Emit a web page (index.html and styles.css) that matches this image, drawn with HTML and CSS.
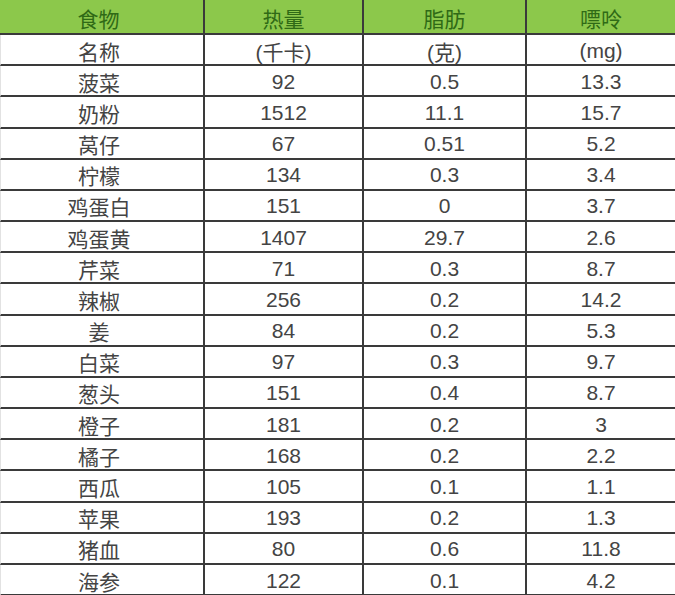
FILE: index.html
```html
<!DOCTYPE html>
<html lang="zh">
<head>
<meta charset="utf-8">
<link rel="stylesheet" href="styles.css">
</head>
<body>
<div class="table">
  <div class="cell head first">食物</div><div class="cell head">热量</div><div class="cell head">脂肪</div><div class="cell head">嘌呤</div>
  <div class="cell first">名称</div><div class="cell">(千卡)</div><div class="cell">(克)</div><div class="cell">(mg)</div>
  <div class="cell first">菠菜</div><div class="cell">92</div><div class="cell">0.5</div><div class="cell">13.3</div>
  <div class="cell first">奶粉</div><div class="cell">1512</div><div class="cell">11.1</div><div class="cell">15.7</div>
  <div class="cell first">莴仔</div><div class="cell">67</div><div class="cell">0.51</div><div class="cell">5.2</div>
  <div class="cell first">柠檬</div><div class="cell">134</div><div class="cell">0.3</div><div class="cell">3.4</div>
  <div class="cell first">鸡蛋白</div><div class="cell">151</div><div class="cell">0</div><div class="cell">3.7</div>
  <div class="cell first">鸡蛋黄</div><div class="cell">1407</div><div class="cell">29.7</div><div class="cell">2.6</div>
  <div class="cell first">芹菜</div><div class="cell">71</div><div class="cell">0.3</div><div class="cell">8.7</div>
  <div class="cell first">辣椒</div><div class="cell">256</div><div class="cell">0.2</div><div class="cell">14.2</div>
  <div class="cell first">姜</div><div class="cell">84</div><div class="cell">0.2</div><div class="cell">5.3</div>
  <div class="cell first">白菜</div><div class="cell">97</div><div class="cell">0.3</div><div class="cell">9.7</div>
  <div class="cell first">葱头</div><div class="cell">151</div><div class="cell">0.4</div><div class="cell">8.7</div>
  <div class="cell first">橙子</div><div class="cell">181</div><div class="cell">0.2</div><div class="cell">3</div>
  <div class="cell first">橘子</div><div class="cell">168</div><div class="cell">0.2</div><div class="cell">2.2</div>
  <div class="cell first">西瓜</div><div class="cell">105</div><div class="cell">0.1</div><div class="cell">1.1</div>
  <div class="cell first">苹果</div><div class="cell">193</div><div class="cell">0.2</div><div class="cell">1.3</div>
  <div class="cell first">猪血</div><div class="cell">80</div><div class="cell">0.6</div><div class="cell">11.8</div>
  <div class="cell first">海参</div><div class="cell">122</div><div class="cell">0.1</div><div class="cell">4.2</div>
</div>
</body>
</html>
```
FILE: styles.css
```css
html, body {
  margin: 0;
  padding: 0;
  background: #ffffff;
  overflow: hidden;
}
.table {
  display: grid;
  grid-template-columns: 203px 159px 163px 150px;
  grid-template-rows: 35px repeat(18, 31.18px);
  width: 675px;
  font-family: "Liberation Sans", "Noto Sans CJK SC", sans-serif;
  font-size: 21px;
  color: #444444;
}
.cell {
  display: flex;
  align-items: center;
  justify-content: center;
  box-sizing: border-box;
  border-bottom: 2px solid #3a3a3a;
  border-left: 2px solid #3a3a3a;
  padding-top: 2px;
}
.cell.first {
  border-left: 1px solid #e2e2e2;
  padding-right: 6px;
}
.head {
  background: #8cc84b;
  color: #2f6a16;
}
.head.first {
  border-left: none;
}
```
